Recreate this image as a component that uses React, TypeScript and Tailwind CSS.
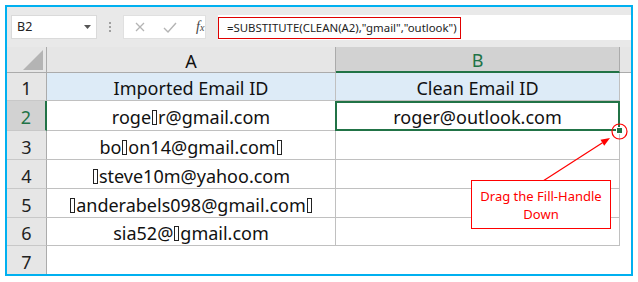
import React from "react";

const Box = () => (
  <span className="inline-block w-[5px] h-[15px] border border-[#222] mx-[1px] align-[-2px]" />
);

const rowHeights = ["h-[28px]", "h-[30px]", "h-[29px]", "h-[29px]", "h-[29px]", "h-[28px]", "h-[28px]"];

export default function App() {
  const colA: React.ReactNode[] = [
    "Imported Email ID",
    <>roge<Box />r@gmail.com</>,
    <>bo<Box />on14@gmail.com<Box /></>,
    <><Box />steve10m@yahoo.com</>,
    <><Box />anderabels098@gmail.com<Box /></>,
    <>sia52@<Box />gmail.com</>,
  ];
  const colB: React.ReactNode[] = ["Clean Email ID", "roger@outlook.com", "", "", "", ""];

  return (
    <div className="relative w-[638px] h-[282px] bg-white pt-[5px] pl-[5px] font-['Noto_Sans',sans-serif] text-[#111]">
      <div className="w-[628px] h-[271px] border-2 border-[#00b0f0] flex flex-col bg-white overflow-hidden">
        {/* toolbar */}
        <div className="h-[40px] shrink-0 bg-[#e9e9e9] flex items-start pt-[8px] pl-[4px]">
          <div className="w-[86px] h-[24px] bg-white border border-[#dadada] flex items-center justify-between pl-[5px] pr-[5px]">
            <span className="text-[12.5px] text-[#222]">B2</span>
            <svg width="7" height="4" viewBox="0 0 7 4"><polygon points="0,0 7,0 3.5,4" fill="#555" /></svg>
          </div>
          <div className="w-[26px] h-[24px] flex flex-col items-center justify-center gap-[2px]">
            <span className="w-[2px] h-[2px] bg-[#a0a0a0]" />
            <span className="w-[2px] h-[2px] bg-[#a0a0a0]" />
            <span className="w-[2px] h-[2px] bg-[#a0a0a0]" />
          </div>
          <div className="w-[83px] h-[24px] bg-white border border-[#e0e0e0] flex items-center pl-[11px]">
            <svg width="10" height="10" viewBox="0 0 10 10">
              <path d="M1 1 L9 9 M9 1 L1 9" stroke="#b4b4b4" strokeWidth="1.3" />
            </svg>
            <svg width="14" height="11" viewBox="0 0 14 11" className="ml-[18px]">
              <path d="M1 6 L5 10 L13 1" stroke="#b4b4b4" strokeWidth="1.4" fill="none" />
            </svg>
            <span className="ml-[19px] font-['Liberation_Serif',serif] italic text-[14px] text-[#444] leading-none">
              f<span className="text-[10px]">x</span>
            </span>
          </div>
          <div className="ml-[12px] flex-1 h-[25px] bg-white pt-[2px]">
            <div className="w-[243px] h-[22px] border-[1.5px] border-[#e00000] flex items-center pl-[8px]">
              <span className="text-[11.4px] text-[#222] whitespace-nowrap">=SUBSTITUTE(CLEAN(A2),"gmail","outlook")</span>
            </div>
          </div>
        </div>

        {/* grid */}
        <div className="grid grid-cols-[40px_289px_284px_1fr] text-[18px]">
          {/* header row */}
          <div className="h-[26px] bg-[#e6e6e6] border-r border-b border-[#ababab] relative">
            <svg width="40" height="26" viewBox="0 0 40 26" className="absolute left-0 top-0">
              <polygon points="36,3 36,23 16,23" fill="#b4b4b4" />
            </svg>
          </div>
          <div className="h-[26px] bg-[#e6e6e6] border-r border-b border-[#ababab] flex items-center justify-center pt-[3px]">A</div>
          <div className="h-[26px] bg-[#d2d2d2] border-r border-[#ababab] border-b-2 border-b-[#217346] flex items-center justify-center pt-[3px] text-[#217346]">B</div>
          <div className="h-[26px] bg-[#e6e6e6] border-b border-[#ababab]" />

          {rowHeights.map((h, i) => {
            const isLast = i === 6;
            const sel = i === 1;
            return (
              <React.Fragment key={i}>
                <div
                  className={`${h} flex items-center justify-center pt-[4px] ${
                    sel
                      ? "bg-[#d2d2d2] border-r-2 border-r-[#217346] text-[#217346]"
                      : "bg-[#e6e6e6] border-r border-r-[#ababab] text-[#222]"
                  } ${isLast ? "" : "border-b border-b-[#c8c8c8]"}`}
                >
                  {i + 1}
                </div>
                {isLast ? (
                  <>
                    <div className={h} />
                    <div className={h} />
                    <div className={h} />
                  </>
                ) : (
                  <>
                    <div
                      className={`${h} ${i === 0 ? "bg-[#ddebf7]" : "bg-white"} border-r border-b border-[#c0c0c0] flex items-center justify-center pt-[4px] whitespace-nowrap`}
                    >
                      {colA[i]}
                    </div>
                    <div
                      className={`${h} relative ${i === 0 ? "bg-[#ddebf7]" : "bg-white"} border-r border-b border-[#c0c0c0] flex items-center justify-center pt-[4px] whitespace-nowrap`}
                    >
                      {colB[i]}
                      {sel && (
                        <div className="absolute left-[-1px] top-0 right-[-1px] bottom-[-1px] border-2 border-[#217346]">
                          <div className="absolute right-[-5px] bottom-[-5px] w-[7px] h-[7px] bg-[#217346] border border-white z-10" />
                        </div>
                      )}
                    </div>
                    <div className={`${h} bg-white`} />
                  </>
                )}
              </React.Fragment>
            );
          })}
        </div>
      </div>

      {/* annotation overlay */}
      <svg className="absolute left-0 top-0 pointer-events-none z-20" width="638" height="282" viewBox="0 0 638 282">
        <circle cx="619.5" cy="131.5" r="7.5" fill="none" stroke="#ff0000" strokeWidth="1.2" />
        <line x1="543" y1="181" x2="602.5" y2="142.8" stroke="#ff0000" strokeWidth="1.2" />
        <polygon points="610,138 604.2,145.8 600.5,139.8" fill="#ff0000" />
      </svg>
      <div className="absolute left-[471px] top-[180px] w-[140px] h-[49px] border-[1.5px] border-[#ff0000] bg-white flex flex-col items-center justify-center text-[13px] leading-[18px] text-[#ff0000] z-30">
        <span>Drag the Fill-Handle</span>
        <span>Down</span>
      </div>
    </div>
  );
}
